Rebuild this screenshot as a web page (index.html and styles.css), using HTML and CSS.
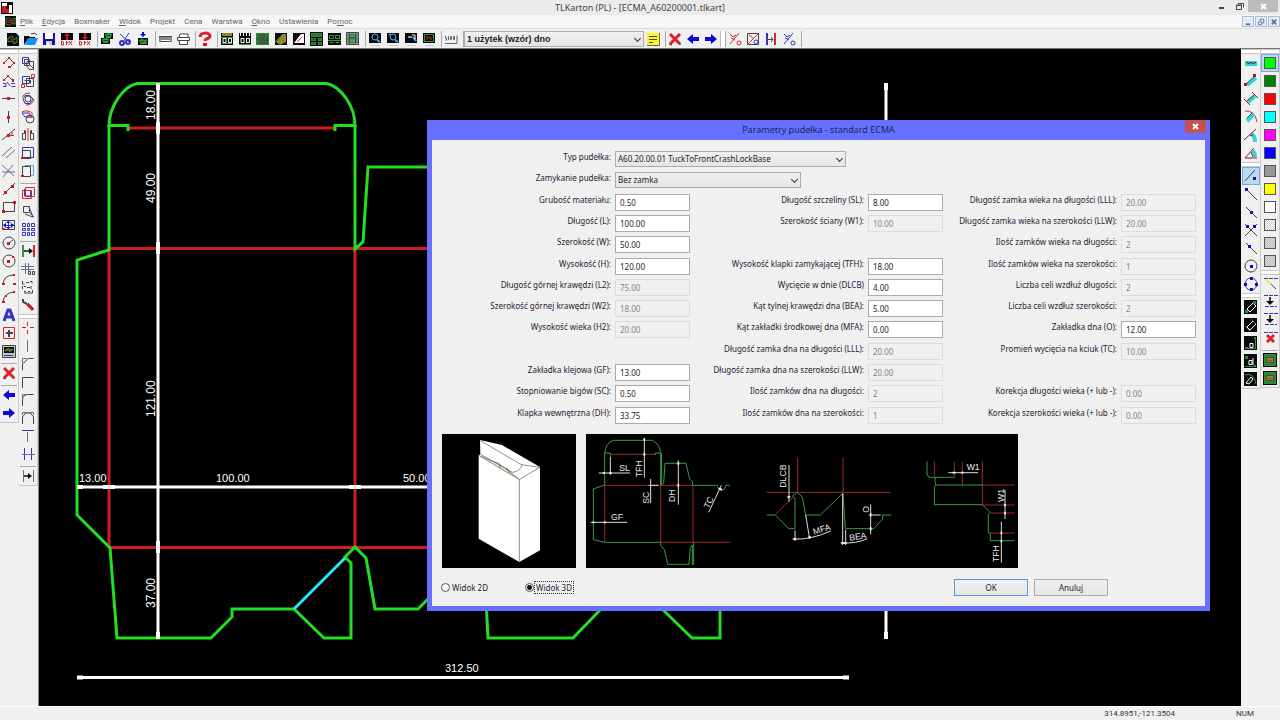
FILE: index.html
```html
<!DOCTYPE html>
<html lang="pl">
<head>
<meta charset="utf-8">
<title>TLKarton (PL) - [ECMA_A60200001.tlkart]</title>
<link rel="stylesheet" href="styles.css">
</head>
<body>
<svg class="sprite" aria-hidden="true">
  <symbol id="left" viewBox="0 0 18 18"><path class="fb" d="M3 9l6-5v3h6v4H9v3z"/></symbol>
  <symbol id="right" viewBox="0 0 18 18"><path class="fb" d="M15 9L9 4v3H3v4h6v3z"/></symbol>
  <symbol id="cross" viewBox="0 0 18 18"><path class="sr w3" d="M4 4l10 10M14 4L4 14"/><path class="sd" d="M3 14l3 1M13 14l2 0"/></symbol>
  <symbol id="board" viewBox="0 0 18 18"><path class="fk" d="M2 2h13v14H2z"/><path class="fg" d="M3 3h11v4H3zM3 8h5v3H3zM10 8h4v3h-4zM3 12h5v3H3zM10 12h4v3h-4z"/><path class="sk" d="M4 5h3M9 5h4M4 9.500h3M11 9.500h2M4 13.500h3M11 13.500h2"/></symbol>
  <symbol id="screen" viewBox="0 0 18 18"><path class="fk" d="M3 3h12v10H3z"/><path class="ssoft" d="M5 15.500h9"/></symbol>
  <symbol id="measure" viewBox="0 0 18 18"><path class="fk" d="M2 2h13v14H2z"/></symbol>
  <symbol id="chip" viewBox="0 0 18 18"><path class="fk" d="M2 2h14v14H2z"/><path class="folive" d="M3 3h12v12H3z"/><path class="fg" d="M3 3h12v3H3zM3 12h12v3H3zM3 6h2v6H3zM13 6h2v6h-2z"/><path class="sk" d="M5.500 6.500h7v5h-7z"/><path class="sr" d="M7 9.500h4"/></symbol>
</svg>

<header class="titlebar">
  <svg class="logo" viewBox="0 0 12 12"><path class="fk" d="M0 0h12v12H0z"/><path class="fw" d="M1 1h5v3H1zM8 3h3v8H8z"/><path class="fr" d="M1 4h4v3h3v4H1z"/></svg>
  <h1 class="title">TLKarton (PL) - [ECMA_A60200001.tlkart]</h1>
  <div class="window-buttons">
    <button aria-label="Minimalizuj"><svg viewBox="0 0 18 12"><path class="sk w2" d="M7 8h5"/></svg></button>
    <button aria-label="Przywróć"><svg viewBox="0 0 18 12"><path class="sk" d="M6.500 5.500h5v4h-5zM8 3.500h5.500v4M6 5h6"/></svg></button>
    <button class="window-close" aria-label="Zamknij"><svg viewBox="0 0 30 12"><path class="sw w2" d="M13 4l5 5M18 4l-5 5"/></svg></button>
  </div>
</header>

<nav class="menubar">
  <svg class="doc-icon" viewBox="0 0 12 12"><path class="fk" d="M0 0h12v12H0z"/><path class="sg" d="M1 9V3l3-1 3 2 4-2v7L8 8l-3 2z"/><path class="sr" d="M3 5h6v2H3z"/></svg>
  <a href="#"><u>P</u>lik</a><a href="#"><u>E</u>dycja</a><a href="#">Boxmaker</a><a href="#"><u>W</u>idok</a><a href="#">Projekt</a><a href="#">Cena</a><a href="#">Warstwa</a><a href="#"><u>O</u>kno</a><a href="#">Ustawienia</a><a href="#">Po<u>m</u>oc</a>
  <div class="document-buttons">
    <button aria-label="Minimalizuj dokument"><svg viewBox="0 0 11 11"><path class="sslate w2" d="M3 8h5"/></svg></button>
    <button aria-label="Przywróć dokument"><svg viewBox="0 0 11 11"><path class="sslate" d="M2.500 5.500h4v3h-4zM4.500 5V2.500h4v4H7"/></svg></button>
    <button aria-label="Zamknij dokument"><svg viewBox="0 0 11 11"><path class="sslate w2" d="M3 3l5 5M8 3L3 8"/></svg></button>
  </div>
</nav>

<div class="toolbar" role="toolbar" aria-label="Główny pasek">
  <button class="tool" aria-label="Nowy"><svg viewBox="0 0 18 18"><path class="fk" d="M3 3h9l3 3v10H3z"/><path class="sg" d="M4 12V8l4-2 2 4 3-3v5l-3 2-2-3z"/><path class="sr" d="M6 8l6 5"/></svg></button>
  <button class="tool" aria-label="Otwórz"><svg viewBox="0 0 18 18"><path class="fk" d="M2 6h5l1 1h5v2H6l-4 6z"/><path class="fazure" d="M6 8h10l-3 7H3z"/><path class="sk" d="M9 4l4-1 2 2"/></svg></button>
  <button class="tool" aria-label="Zapisz"><svg viewBox="0 0 18 18"><path class="fnavy" d="M3 3h12v12H3z"/><path class="fw" d="M5 3h8v6H5z"/><path class="fsilver" d="M6 11h6v4H6z"/><path class="fw" d="M7 12h2v3H7z"/></svg></button>
  <button class="tool" aria-label="Import DXF"><svg viewBox="0 0 18 18"><path class="fk" d="M3 3h12v7H3z"/><path class="fr" d="M9 3l3 3h-2v4H8V6H6z"/><path class="sr" d="M3.500 11v4h2v-3zM8.500 11v4M8.500 12.500h2M11 11l3 4M14 11l-3 4"/></svg></button>
  <button class="tool" aria-label="Eksport DXF"><svg viewBox="0 0 18 18"><path class="fk" d="M3 3h12v7H3z"/><path class="fr" d="M9 10l3-3h-2V3H8v4H6z"/><path class="sr" d="M3.500 11v4h2v-3zM8.500 11v4M8.500 12.500h2M11 11l3 4M14 11l-3 4"/></svg></button>
  <i class="sep"></i>
  <button class="tool" aria-label="Kopiuj"><svg viewBox="0 0 18 18"><path class="fk" d="M6 3h9v6H6zM3 8h9v6H3z"/><path class="sg w2" d="M7 5l4-1 3 1M4 10l4-1 3 1M5 12h5M8 7h5"/></svg></button>
  <button class="tool" aria-label="Wytnij"><svg viewBox="0 0 18 18"><path class="sb" d="M4 4l9 8M13 3L7 12"/><circle class="sb w2" cx="6" cy="13" r="2"/><circle class="sb w2" cx="12" cy="12" r="2"/></svg></button>
  <button class="tool" aria-label="Wstaw"><svg viewBox="0 0 18 18"><path class="fb" d="M8 2h2v2H8zM6 4h6l-3 3z"/><path class="fk" d="M4 8h10v7H4z"/><path class="sg w2" d="M5 11l3-1 3 1 2-1M6 13h7"/></svg></button>
  <i class="sep"></i>
  <button class="tool" aria-label="Drukuj"><svg viewBox="0 0 18 18"><path class="fgray" d="M3 6h13v6H3z"/><path class="fw" d="M5 4h9v2H5zM5 10h9v4H5z"/><path class="sk" d="M3 6.500h13M5 11.500h9"/></svg></button>
  <button class="tool" aria-label="Podgląd wydruku"><svg viewBox="0 0 18 18"><path class="fw sk" d="M3.500 7.500h12v3h-12zM5.500 10.500h8v4h-8zM5 7l1-3h8v3"/></svg></button>
  <i class="sep"></i>
  <button class="tool" aria-label="Pomoc"><svg viewBox="0 0 18 18"><path class="sr w3" d="M4 7c0-5 10-5 10-1 0 3-5 2-5 5"/><path class="fr" d="M7 13h4v3H7z"/></svg></button>
  <i class="sep"></i>
  <button class="tool" aria-label="Wymiary"><svg viewBox="0 0 18 18"><path class="fk" d="M3 3h12v12H3z"/><path class="folive" d="M4 3h10v3H4z"/><path class="sw" d="M5 8.500h3v4H5zM10.500 8.500h3v4h-3z"/><path class="sg" d="M3 7.500h12M4 13.500h10"/></svg></button>
  <button class="tool" aria-label="Wymiary 2"><svg viewBox="0 0 18 18"><path class="fk" d="M3 3h12v12H3z"/><path class="fw" d="M4 3h1v3H4zM7 3h1v3H7zM10 3h1v3h-1zM13 3h1v3h-1z"/><path class="sw" d="M5 8.500h3v4H5zM10.500 8.500h3v4h-3z"/><path class="sg" d="M3 14.500h12"/></svg></button>
  <button class="tool" aria-label="Użytki"><svg viewBox="0 0 18 18"><path class="fg" d="M2 3h13v12H2z"/><path class="sk" d="M4.500 5h3v3h-3zM10.500 5h3v3h-3zM4.500 10.500h3v3h-3zM10.500 10.500h3v3h-3zM2 9h13M9 3v12"/></svg></button>
  <button class="tool" aria-label="Bryła"><svg viewBox="0 0 18 18"><path class="fk" d="M3 3h12v12H3z"/><path class="folive" d="M4 12l7-8h3v8l-6 3z"/><path class="sg" d="M3 12l8-8"/></svg></button>
  <button class="tool" aria-label="Bryła biała"><svg viewBox="0 0 18 18"><path class="fk" d="M3 3h12v12H3z"/><path class="fw" d="M4 13l7-9h3v9z"/><path class="sr" d="M7 12l5-5"/></svg></button>
  <button class="tool" aria-label="Rozkład"><svg viewBox="0 0 18 18"><use href="#board"/></svg></button>
  <button class="tool" aria-label="Matryca"><svg viewBox="0 0 18 18"><path class="fk" d="M2 3h13v12H2z"/><path class="sg" d="M3.500 5.500h4v3h-4zM9.500 5.500h4v3h-4zM2 10.500h13M3.500 12.500h4M9.500 12.500h4"/></svg></button>
  <button class="tool" aria-label="Arkusz"><svg viewBox="0 0 18 18"><path class="sk fgray" d="M2.500 2.500h12v12h-12z"/><path class="sg w2" d="M4 5h9M4 9h9M4 12h9"/><path class="sk" d="M5.500 4v9M11.500 4v9M5 7.500h7"/></svg></button>
  <i class="sep"></i>
  <button class="tool" aria-label="Powiększ"><svg viewBox="0 0 18 18"><use href="#screen"/><circle class="sazure" cx="9" cy="7" r="3"/><path class="sazure w2" d="M11 10l3 2"/></svg></button>
  <button class="tool" aria-label="Powiększ okno"><svg viewBox="0 0 18 18"><use href="#screen"/><circle class="sazure" cx="9" cy="7" r="3"/><path class="sazure w2" d="M11 10l3 2M5 4l1 1"/></svg></button>
  <button class="tool" aria-label="Pomniejsz"><svg viewBox="0 0 18 18"><use href="#screen"/><path class="sazure w2" d="M6 7h4M11 7l3 4"/><path class="sw" d="M10 5h3v4"/></svg></button>
  <button class="tool" aria-label="Cały rysunek"><svg viewBox="0 0 18 18"><use href="#screen"/><path class="sg" d="M4.500 4.500h9v7h-9z"/><path class="sr" d="M7 10V6l2 2 2-1v3"/></svg></button>
  <i class="sep"></i>
  <button class="tool" aria-label="Skala"><svg viewBox="0 0 18 18"><path class="sgray" d="M3 13.500h12v-8M3.500 6v2h1v2h-1M6.500 6v4M8.500 6.500h1v3h-1zM11.500 6.500h1v3h-1z"/></svg></button>
  <i class="sep"></i>
  <span class="select layer"><select aria-label="Warstwa"><option>1 użytek (wzór) dno</option></select></span>
  <button class="tool" aria-label="Notatka"><svg viewBox="0 0 18 18"><path class="fy" d="M3 3h12v12H3z"/><path class="sk" d="M5 6.500h8M5 9.500h8M5 12.500h4"/><path class="sgray" d="M3 15.500h12.500V3"/></svg></button>
  <i class="sep"></i>
  <button class="tool" aria-label="Usuń"><svg><use href="#cross"/></svg></button>
  <button class="tool" aria-label="Cofnij"><svg><use href="#left"/></svg></button>
  <button class="tool" aria-label="Ponów"><svg><use href="#right"/></svg></button>
  <i class="sep grip"></i>
  <button class="tool" aria-label="Przyciąganie"><svg viewBox="0 0 18 18"><path class="sr" d="M4 14L13 3M4 4l3 3 3-2M5 8l4 2"/><circle class="sr" cx="13" cy="13" r="2"/></svg></button>
  <button class="tool" aria-label="Przyciąganie w oknie"><svg viewBox="0 0 18 18"><path class="sk" d="M3.500 3.500h11v11h-11z"/><path class="sr" d="M4 14L14 4M5 5l4 3"/><circle class="sb" cx="12" cy="12" r="2"/></svg></button>
  <button class="tool" aria-label="Odległość"><svg viewBox="0 0 18 18"><path class="sr w2" d="M13 3v12"/><path class="sb w2" d="M5 3v12"/><path class="sk" d="M6 9.500h5M9 7l2 2.500L9 12"/></svg></button>
  <button class="tool" aria-label="Punkty"><svg viewBox="0 0 18 18"><path class="sb" d="M4 14L13 3M4 4l3 3 3-2M5 8l4 2"/><circle class="sb" cx="13" cy="13" r="2"/></svg></button>
  <i class="sep"></i>
</div>

<main class="workspace">
  <aside class="dock">
    <div class="strip" role="toolbar" aria-label="Rysowanie">
      <i class="handle"></i>
      <button class="tool" aria-label="Polilinia"><svg viewBox="0 0 18 18"><path class="sk" d="M4 9l5-5 5 5-4 4"/><path class="fr" d="M3 8h2v2H3zM8 3h2v2H8zM13 8h2v2h-2zM8 12h3v2H8z"/></svg></button>
      <button class="tool" aria-label="Polilinia z wymiarem"><svg viewBox="0 0 18 18"><path class="sk" d="M4 8l4-4 5 5"/><path class="fr" d="M3 7h2v2H3zM7 3h2v2H7zM12 7h2v3h-2z"/><path class="sb" d="M3 11.500h3v3H3M11 11.500h4M11.500 14.500h4M7 10l3 4"/></svg></button>
      <button class="tool" aria-label="Pozioma"><svg viewBox="0 0 18 18"><path class="sk" d="M2 8.500h13"/><path class="fr" d="M7 7h3v3H7z"/></svg></button>
      <button class="tool" aria-label="Pionowa"><svg viewBox="0 0 18 18"><path class="sk" d="M8.500 3v12"/><path class="fr" d="M7 8h3v3H7z"/></svg></button>
      <button class="tool" aria-label="Kąt"><svg viewBox="0 0 18 18"><path class="sk" d="M2 14L15 3"/><path class="sr" d="M8 9.500h6M12 6v4"/><path class="fr" d="M7 8h3v3H7z"/></svg></button>
      <button class="tool" aria-label="Równoległa"><svg viewBox="0 0 18 18"><path class="sslate" d="M2 12L12 3M6 14l9-8"/></svg></button>
      <button class="tool" aria-label="Przecięcie"><svg viewBox="0 0 18 18"><path class="sslate" d="M2 3l12 11M13 3L3 15M2 10h13"/></svg></button>
      <button class="tool" aria-label="Odcinek"><svg viewBox="0 0 18 18"><path class="sk" d="M3 15L15 3"/><path class="fr" d="M4 11h3v3H4zM11 5h3v3h-3z"/></svg></button>
      <button class="tool" aria-label="Prostokąt"><svg viewBox="0 0 18 18"><path class="sk" d="M3.500 4.500h11v9h-11z"/><path class="fr" d="M2 12h3v3H2zM13 3h3v3h-3z"/></svg></button>
      <button class="tool" aria-label="Prostokąt wymiarowany"><svg viewBox="0 0 18 18"><path class="sk" d="M2.500 4.500h12v9h-12z"/><path class="sb" d="M4 9.500h10M8.500 5v8"/><path class="fb" d="M3 9l3-2v5zM14 9l-3-2v5zM8 5l-2 2h5zM8 13l-2-2h5z"/><path class="fr" d="M2 12h3v2H2z"/></svg></button>
      <button class="tool" aria-label="Okrąg z promieniem"><svg viewBox="0 0 18 18"><circle class="sk" cx="9" cy="9" r="6"/><path class="sb" d="M9 9l4-3"/><path class="fr" d="M7 8h3v3H7z"/></svg></button>
      <button class="tool" aria-label="Okrąg"><svg viewBox="0 0 18 18"><circle class="sk" cx="9" cy="9" r="6"/><path class="fr" d="M7 8h3v3H7zM12 4h2v2h-2z"/></svg></button>
      <button class="tool" aria-label="Łuk trzypunktowy"><svg viewBox="0 0 18 18"><path class="sk" d="M3 14Q4 5 14 5"/><path class="fr" d="M2 13h3v2H2zM13 4h2v2h-2zM13 13h3v2h-3z"/></svg></button>
      <button class="tool" aria-label="Łuk"><svg viewBox="0 0 18 18"><path class="sk" d="M3 14Q4 5 14 4"/><path class="fr" d="M2 13h3v2H2zM13 3h2v2h-2zM5 7h2v2H5z"/></svg></button>
      <button class="tool" aria-label="Tekst"><svg viewBox="0 0 18 18"><path class="sb w3" d="M4 15L8 4h2l4 11M6 11h7"/></svg></button>
      <button class="tool" aria-label="Punkt"><svg viewBox="0 0 18 18"><path class="sr" d="M3.500 3.500h11v11h-11z"/><path class="sk w2" d="M9 6v7M6 9h7"/></svg></button>
      <button class="tool" aria-label="Biblioteka"><svg viewBox="0 0 18 18"><path class="sk fsilver" d="M2.500 3.500h13v12h-13z"/><path class="fk" d="M4 5h10v6H4z"/><path class="sg w2" d="M5 9l3-2 2 2 3-2"/><path class="sr" d="M7 8h4"/><path class="sb" d="M4 13.500h9"/></svg></button>
      <i class="rule"></i>
      <button class="tool" aria-label="Kasuj"><svg><use href="#cross"/></svg></button>
      <i class="rule"></i>
      <button class="tool" aria-label="Wstecz"><svg><use href="#left"/></svg></button>
      <button class="tool" aria-label="Dalej"><svg><use href="#right"/></svg></button>
      <i class="end"></i>
    </div>
    <div class="strip" role="toolbar" aria-label="Modyfikacje">
      <i class="handle"></i>
      <button class="tool" aria-label="Przesuń"><svg viewBox="0 0 18 18"><path class="sb" d="M3.500 3.500h6v6h-6z"/><path class="sk" d="M5.500 5.500h5v6h-5zM8 7.500h6.500v8h-4l-3-4zM10 10l4 4"/></svg></button>
      <button class="tool" aria-label="Powiel"><svg viewBox="0 0 18 18"><path class="sb" d="M3.500 4.500h7v7h-7z"/><path class="sk" d="M7.500 6.500h7v8h-7zM5.500 8.500h6v3"/><path class="sr" d="M12.500 2.500h3v3h-3zM2.500 12.500h3v3h-3z"/></svg></button>
      <button class="tool" aria-label="Obróć"><svg viewBox="0 0 18 18"><path class="sr" d="M3 7q3-5 8-4M7 15q7 0 8-6"/><path class="sb" d="M6 5.500h5l3 3.500-3 4.500H6L4 9z"/><circle class="sk" cx="9" cy="9" r="3"/></svg></button>
      <button class="tool" aria-label="Obróć kopię"><svg viewBox="0 0 18 18"><path class="sb" d="M3 5h7l3 4H6z"/><circle class="sk" cx="11" cy="11" r="4"/><path class="sr" d="M3 4q6-3 11 2M7 9h7"/></svg></button>
      <button class="tool" aria-label="Odbicie"><svg viewBox="0 0 18 18"><path class="sr" d="M9 2v13"/><path class="sk" d="M3.500 13.500v-6h2v-3h1v9zM14.500 13.500v-6h-2v-3h-1v9z"/></svg></button>
      <button class="tool" aria-label="Skaluj"><svg viewBox="0 0 18 18"><path class="sb" d="M3.500 3.500h11v10h-11z"/><path class="sk" d="M3.500 6.500h8v8h-8z"/><path class="fr" d="M2 13h3v2H2z"/></svg></button>
      <button class="tool" aria-label="Rozciągnij"><svg viewBox="0 0 18 18"><path class="sazure" d="M6 3.500h8.500v10H12"/><path class="sk" d="M3.500 4.500h8v10h-8z"/><path class="fr" d="M2 13h3v2H2z"/></svg></button>
      <i class="rule"></i>
      <button class="tool" aria-label="Zaznacz"><svg viewBox="0 0 18 18"><path class="sr" d="M3.500 6.500h9v8h-9zM6.500 3.500h9v9h-9z"/><path class="sb" d="M5.500 5v7h6V7"/></svg></button>
      <button class="tool" aria-label="Wielokąt"><svg viewBox="0 0 18 18"><path class="sk" d="M4.500 4.500h6v6h-6zM10 5l4 10-8-3"/><path class="sb" d="M11 11l4 4"/></svg></button>
      <button class="tool" aria-label="Siatka"><svg viewBox="0 0 18 18"><path class="sb" d="M3.500 3.500h3v3h-3zM8.500 3.500h2v3h-2zM12.500 3.500h3v3h-3zM3.500 8.500h3v2h-3zM8.500 8.500h2v2h-2zM12.500 8.500h3v2h-3zM3.500 12.500h3v3h-3zM8.500 12.500h2v3h-2zM12.500 12.500h3v3h-3z"/></svg></button>
      <i class="rule"></i>
      <button class="tool" aria-label="Dociągnij"><svg viewBox="0 0 18 18"><path class="sg w2" d="M4 3v12"/><path class="sr w2" d="M15 3v12"/><path class="sk w2" d="M5 9h6"/><path class="fk" d="M10 6l4 3-4 3z"/></svg></button>
      <button class="tool" aria-label="Współrzędne"><svg viewBox="0 0 18 18"><path class="sslate" d="M2 6.500h13M2 9.500h13M6.500 3v11M9.500 3v11"/><path class="sk" d="M9.500 11.500h2v3h-2zM13.500 11.500h2v3h-2z"/></svg></button>
      <button class="tool" aria-label="Lista"><svg viewBox="0 0 18 18"><path class="sk" d="M3.500 3v3h2M7 4.500h3M11 3.500h2v2M3.500 8v3M5 8.500h2M8 9.500h3M12 8v3M5 13.500h2M9 13.500h2M13.500 12v3H5"/></svg></button>
      <button class="tool" aria-label="Narzędzia"><svg viewBox="0 0 18 18"><path class="sk w2" d="M4 3v3l4 2"/><path class="sr w3" d="M8 8l6 6"/><path class="sd" d="M9 7l6 6"/></svg></button>
      <i class="handle"></i>
      <button class="tool" aria-label="Podziel"><svg viewBox="0 0 18 18"><path class="sr" d="M3 8.500h4M11 8.500h4M8.500 3v4M8.500 11v4"/></svg></button>
      <button class="tool" aria-label="Utnij"><svg viewBox="0 0 18 18"><path class="sslate" d="M8.500 3v12"/></svg></button>
      <button class="tool" aria-label="Faza"><svg viewBox="0 0 18 18"><path class="sk" d="M3.500 15V9l6-5.500h5"/><path class="sslate" d="M3.500 8V3.500H8"/></svg></button>
      <button class="tool" aria-label="Narożnik"><svg viewBox="0 0 18 18"><path class="sk" d="M3.500 15V4.500h11"/></svg></button>
      <button class="tool" aria-label="Zaokrąglenie"><svg viewBox="0 0 18 18"><path class="sk" d="M3.500 15V9q0-5 5-5.500h6"/><path class="sslate" d="M3.500 7V3.500H7"/></svg></button>
      <button class="tool" aria-label="Zaokrąglenie podwójne"><svg viewBox="0 0 18 18"><path class="sk" d="M3.500 15V8l3-4h5l3 4v7"/><path class="sslate" d="M3.500 6V3.500h11V6"/></svg></button>
      <button class="tool" aria-label="Przedłuż"><svg viewBox="0 0 18 18"><path class="sb" d="M3 3.500h12"/><path class="sslate" d="M8.500 5v10"/></svg></button>
      <button class="tool" aria-label="Rozsuń"><svg viewBox="0 0 18 18"><path class="sb" d="M5.500 3v12M12.500 3v12"/><path class="sslate" d="M3 9.500h13"/></svg></button>
      <i class="rule"></i>
      <button class="tool" aria-label="Wyrównaj"><svg viewBox="0 0 18 18"><path class="sslate" d="M4.500 3v12M14.500 3v12"/><path class="sk w2" d="M5 9h5"/><path class="fk" d="M9 6l4 3-4 3z"/></svg></button>
      <i class="end"></i>
    </div>
  </aside>

  <section class="canvas">
    <svg class="drawing" viewBox="39 49 1202 657" preserveAspectRatio="xMinYMin meet" role="img" aria-label="Siatka pudełka">
      <g class="crease"><path d="M128 128H336M109 248.500H440M109 547.500H440M109 248V548M355 248V548"/></g>
      <g class="cut">
        <path d="M128 131V125.500H109C109 106 124 86 137 83.500H327C341 87 355 106 355 125.500H335V131"/>
        <path d="M109 125V250L77 260V515L110 548L117 638H211L232 617V609H294L324 638H351V563L345 557L355 547L366 558L375 609H418L430 597"/>
        <path d="M355 125V249L363 242L368 167H440M486 600L488 638H573L602 608M661 608L692 638H720V600"/>
      </g>
      <path class="perf" d="M294 609L345 558"/>
      <g class="dimension">
        <path d="M158 83V639M77 487H440M77 677.500H848M886 83V639"/>
        <path class="ticks" d="M158 83v7M158 122v12M158 242v12M158 541v12M158 632v7M77 487h6M103 487h12M349 487h12M77 677.500h6M843 677.500h6M886 83v7M886 632v7"/>
      </g>
      <g class="measure">
        <text x="79" y="482">13.00</text><text x="216" y="482">100.00</text><text x="403" y="482">50.00</text><text x="445" y="672">312.50</text>
        <g class="upright"><text transform="translate(155 120) rotate(-90)">18.00</text><text transform="translate(155 203) rotate(-90)">49.00</text><text transform="translate(155 417) rotate(-90)">121.00</text><text transform="translate(155 608) rotate(-90)">37.00</text></g>
      </g>
    </svg>

    <form class="dialog" role="dialog" aria-labelledby="dialog-title" onsubmit="return false">
      <div class="dialog-bar"><h2 id="dialog-title">Parametry pudełka - standard ECMA</h2>
        <button type="button" class="dialog-close" aria-label="Zamknij okno"><svg viewBox="0 0 21 13"><path class="sw w2" d="M8 4l5 5M13 4l-5 5"/></svg></button></div>
      <div class="dialog-body">
        <div class="fields">
          <div class="column">
            <div class="field"><label for="typ">Typ pudełka:</label><span class="select wide"><select id="typ"><option>A60.20.00.01 TuckToFrontCrashLockBase</option></select></span></div>
            <div class="field"><label for="zam">Zamykanie pudełka:</label><span class="select medium"><select id="zam"><option>Bez zamka</option></select></span></div>
            <div class="field"><label for="gm">Grubość materiału:</label><input id="gm" value="0.50"></div>
            <div class="field"><label for="l">Długość (L):</label><input id="l" value="100.00"></div>
            <div class="field"><label for="w">Szerokość (W):</label><input id="w" value="50.00"></div>
            <div class="field"><label for="h">Wysokość (H):</label><input id="h" value="120.00"></div>
            <div class="field"><label for="l2">Długość górnej krawędzi (L2):</label><input id="l2" value="75.00" disabled></div>
            <div class="field"><label for="w2">Szerokość górnej krawędzi (W2):</label><input id="w2" value="18.00" disabled></div>
            <div class="field"><label for="h2">Wysokość wieka (H2):</label><input id="h2" value="20.00" disabled></div>
            <div class="field"></div>
            <div class="field"><label for="gf">Zakładka klejowa (GF):</label><input id="gf" value="13.00"></div>
            <div class="field"><label for="sc">Stopniowanie bigów (SC):</label><input id="sc" value="0.50"></div>
            <div class="field"><label for="dh">Klapka wewnętrzna (DH):</label><input id="dh" value="33.75"></div>
          </div>
          <div class="column">
            <div class="field"></div>
            <div class="field"></div>
            <div class="field"><label for="sl">Długość szczeliny (SL):</label><input id="sl" value="8.00"></div>
            <div class="field"><label for="w1">Szerokość ściany (W1):</label><input id="w1" value="10.00" disabled></div>
            <div class="field"></div>
            <div class="field"><label for="tfh">Wysokość klapki zamykającej (TFH):</label><input id="tfh" value="18.00"></div>
            <div class="field"><label for="dlcb">Wycięcie w dnie (DLCB)</label><input id="dlcb" value="4.00"></div>
            <div class="field"><label for="bea">Kąt tylnej krawędzi dna (BEA):</label><input id="bea" value="5.00"></div>
            <div class="field"><label for="mfa">Kąt zakładki środkowej dna (MFA):</label><input id="mfa" value="0.00"></div>
            <div class="field"><label for="lll">Długość zamka dna na długości (LLL):</label><input id="lll" value="20.00" disabled></div>
            <div class="field"><label for="llw">Długość zamka dna na szerokości (LLW):</label><input id="llw" value="20.00" disabled></div>
            <div class="field"><label for="izd">Ilość zamków dna na długości:</label><input id="izd" value="2" disabled></div>
            <div class="field"><label for="izs">Ilość zamków dna na szerokości:</label><input id="izs" value="1" disabled></div>
          </div>
          <div class="column">
            <div class="field"></div>
            <div class="field"></div>
            <div class="field"><label for="wlll">Długość zamka wieka na długości (LLL):</label><input id="wlll" value="20.00" disabled></div>
            <div class="field"><label for="wllw">Długość zamka wieka na szerokości (LLW):</label><input id="wllw" value="20.00" disabled></div>
            <div class="field"><label for="wzd">Ilość zamków wieka na długości:</label><input id="wzd" value="2" disabled></div>
            <div class="field"><label for="wzs">Ilość zamków wieka na szerokości:</label><input id="wzs" value="1" disabled></div>
            <div class="field"><label for="lcd">Liczba celi wzdłuż długości:</label><input id="lcd" value="2" disabled></div>
            <div class="field"><label for="lcs">Liczba celi wzdłuż szerokości:</label><input id="lcs" value="2" disabled></div>
            <div class="field"><label for="o">Zakładka dna (O):</label><input id="o" value="12.00"></div>
            <div class="field"><label for="tc">Promień wycięcia na kciuk (TC):</label><input id="tc" value="10.00" disabled></div>
            <div class="field"></div>
            <div class="field"><label for="kd">Korekcja długości wieka (+ lub -):</label><input id="kd" value="0.00" disabled></div>
            <div class="field"><label for="ks">Korekcja szerokości wieka (+ lub -):</label><input id="ks" value="0.00" disabled></div>
          </div>
        </div>

        <div class="previews">
          <svg class="preview box" viewBox="36 27 402 402" role="img" aria-label="Pudełko 3D">
            <path class="face" d="M146 91L151 88L150 45L216 60L330 126V376L268 411L146 341Z"/>
            <path class="tint" d="M158 98L205 116L262 156L238 148Z"/>
            <path class="edge" d="M146 91L268 164L330 126M268 164V410M151 47L274 119L330 127M151 88L248 142Q271 139 276 119M152 94L205 115L266 161M205 115L212 128M230 128L240 143"/>
          </svg>
          <svg class="preview net" viewBox="468 27 1296 402" role="img" aria-label="Oznaczenia wymiarów">
            <g class="thin-red"><path d="M540 88H676M524 181H790M524 181V351M692 181V351M789 181V351M692 352H900"/></g>
            <g class="thin-green"><path d="M541 96V84H524V180L490 192V344L524 352H692M524 84Q527 55 549 46H667Q690 58 692 84H676V90M695 84V180L701 174L705 115H768L779 162L788 170V181H862Q864 196 874 196Q885 196 887 181H900M692 84V180M692 352V362L703 373L713 418H777L781 369L787 360V418H791V352"/></g>
            <g class="thin-white"><path d="M643 40V158M541 96V150M506 144H600M662 162V234M656 181H686M745 106V239M482 292H592M874 181L836 262"/><path class="mark" d="M643 40v8M643 84v8M518 144h7M538 144h7M745 111v8M745 177v8M487 292h7M521 292h7M866 190l10 4"/></g>
            <g class="label"><text x="568" y="137">SL</text><text x="543" y="286">GF</text><text transform="translate(637 157) rotate(-90)">TFH</text><text transform="translate(657 236) rotate(-90)">SC</text><text transform="translate(736 231) rotate(-90)">DH</text><text transform="translate(836 252) rotate(-63)">TC</text></g>
            <g transform="translate(900 0)">
              <g class="thin-red"><path d="M110 202H483M203 98V202M339 98V202M136 268L190 216M613 110V154M673 110V155M697 110V180M757 110V240M757 180H854M757 240H854M780 264H854M780 324H854"/></g>
              <g class="thin-green"><path d="M110 270H136L176 311H195V220L188 214L201 202L217 216L227 270H271L339 204L346 311H431L458 282V270H484M591 110V145Q592 155 599 157H674M616 157Q612 170 618 180H757M618 180L613 186V239H757L780 262L775 268V324H781V347H854"/></g>
              <g class="thin-white"><path d="M177 120V230M227 270L239 342M195 316V348M188 342Q240 346 302 318M338 206V360M347 314V360M332 354Q380 356 412 341M422 238V328M416 270H452M655 143H744M825 194V282M814 290V413"/><path class="mark" d="M172 216h9M190 342h9M235 336h8M334 354h16M422 265v9M422 307v9M668 143h8M693 143h8M825 236v8M825 260v8M814 320v8M814 344v8"/></g>
              <g class="label"><text transform="translate(169 188) rotate(-90)">DLCB</text><text transform="translate(252 329) rotate(-17)">MFA</text><text transform="translate(359 347) rotate(-8)">BEA</text><text transform="translate(417 263) rotate(-90)">O</text><text x="710" y="136">W1</text><text transform="translate(821 231) rotate(-90)">W1</text><text transform="translate(807 411) rotate(-90)">TFH</text></g>
            </g>
          </svg>
        </div>

        <div class="actions">
          <label class="choice"><input type="radio" name="view"><span>Widok 2D</span></label>
          <label class="choice"><input type="radio" name="view" checked><span class="focused">Widok 3D</span></label>
          <div class="buttons"><button class="push default">OK</button><button type="button" class="push">Anuluj</button></div>
        </div>
      </div>
    </form>
  </section>

  <aside class="dock right-dock">
    <div class="strip" role="toolbar" aria-label="Wymiarowanie">
      <i class="handle"></i>
      <button class="tool" aria-label="Linijka"><svg viewBox="0 0 18 18"><path class="fc" d="M3 7h12v5H3z"/><path class="sk" d="M4 8.500h2v1h2v-1h2v1h2v-1h2"/></svg></button>
      <button class="tool" aria-label="Wymiar skośny"><svg viewBox="0 0 18 18"><path class="sc w4" d="M5 13l9-7"/><path class="sk" d="M4 12L13 4"/><path class="fd" d="M2 11h3v3H2zM11 2h3v3h-3z"/></svg></button>
      <button class="tool" aria-label="Wymiar między liniami"><svg viewBox="0 0 18 18"><path class="sc w4" d="M6 12l7-6"/><path class="sk" d="M5 11l7-6"/><path class="sd" d="M2 9l6 6M10 2l6 6"/></svg></button>
      <button class="tool" aria-label="Promień"><svg viewBox="0 0 18 18"><path class="sr" d="M3 3q10-1 12 11"/><path class="sc w4" d="M5 13l7-7"/><path class="sk" d="M5 10l5-5"/></svg></button>
      <button class="tool" aria-label="Wymiar kąta"><svg viewBox="0 0 18 18"><path class="sc w4" d="M9 8q4 1 4 8"/><path class="sd" d="M2 14L14 3"/><path class="sk" d="M8 9l3 1"/></svg></button>
      <button class="tool" aria-label="Kąt między liniami"><svg viewBox="0 0 18 18"><path class="sc w4" d="M10 7q3 1 3 6"/><path class="sd" d="M15 14H3L12 4"/><path class="sk" d="M9 8l2 5"/></svg></button>
      <i class="handle"></i>
      <button class="tool active" aria-label="Koniec"><svg viewBox="0 0 18 18"><path class="sk" d="M3 14L13 3"/><path class="fnavy" d="M11 10h3v3h-3z"/></svg></button>
      <button class="tool" aria-label="Początek"><svg viewBox="0 0 18 18"><path class="sk" d="M4 4l11 11"/><path class="fnavy" d="M3 3h3v3H3z"/></svg></button>
      <button class="tool" aria-label="Środek"><svg viewBox="0 0 18 18"><path class="sk" d="M4 4l11 11"/><path class="fnavy" d="M8 8h3v3H8z"/></svg></button>
      <button class="tool" aria-label="Przecięcie linii"><svg viewBox="0 0 18 18"><path class="sk" d="M3 3l12 12M15 3L3 15"/><path class="fb" d="M4 4h3v3H4zM11 4h3v3h-3z"/></svg></button>
      <button class="tool" aria-label="Najbliższy"><svg viewBox="0 0 18 18"><path class="sk" d="M4 4l11 11"/><path class="fb" d="M6 6h3v3H6z"/></svg></button>
      <button class="tool" aria-label="Środek okręgu"><svg viewBox="0 0 18 18"><circle class="sk" cx="9" cy="9" r="6"/><path class="fb" d="M8 8h3v3H8z"/></svg></button>
      <button class="tool" aria-label="Kwadrant"><svg viewBox="0 0 18 18"><circle class="sk" cx="9" cy="9" r="6"/><path class="fb" d="M8 2h3v3H8zM8 13h3v3H8zM2 8h3v3H2zM13 8h3v3h-3z"/></svg></button>
      <i class="handle"></i>
      <button class="tool" aria-label="Pomiar 1"><svg viewBox="0 0 18 18"><use href="#measure"/><path class="sw" d="M5 11l6-6 3 3-6 6z"/><path class="fg" d="M3 12h3v3H3zM11 3h3v3h-3z"/></svg></button>
      <button class="tool" aria-label="Pomiar 2"><svg viewBox="0 0 18 18"><use href="#measure"/><path class="sw" d="M5 11l6-6 3 3-6 6z"/><path class="sg" d="M3 10l5 5M9 3l5 5"/></svg></button>
      <button class="tool" aria-label="Pomiar 3"><svg viewBox="0 0 18 18"><use href="#measure"/><path class="sg" d="M3 14.500h10.500V3"/><path class="sw" d="M8 9.500h3v4H8z"/><path class="fg" d="M3 13h3v2H3zM12 3h2v2h-2z"/></svg></button>
      <button class="tool" aria-label="Pomiar 4"><svg viewBox="0 0 18 18"><use href="#measure"/><path class="sw" d="M7 8.500h3v4H7zM11 6v7"/><path class="fg" d="M3 4h3v3H3zM12 13h2v2H3v-1h9z"/></svg></button>
      <button class="tool" aria-label="Pomiar 5"><svg viewBox="0 0 18 18"><use href="#measure"/><path class="sg" d="M3 5q9-3 11 9"/><path class="sw" d="M4 13l5-6 2 2-4 5z"/></svg></button>
      <i class="end"></i>
    </div>
    <div class="strip" role="toolbar" aria-label="Kolory linii">
      <i class="handle"></i>
      <button class="tool active" aria-label="Jasnozielony"><i class="swatch lime"></i></button>
      <button class="tool" aria-label="Zielony"><i class="swatch green"></i></button>
      <button class="tool" aria-label="Czerwony"><i class="swatch red"></i></button>
      <button class="tool" aria-label="Błękitny"><i class="swatch cyan"></i></button>
      <button class="tool" aria-label="Purpurowy"><i class="swatch magenta"></i></button>
      <button class="tool" aria-label="Niebieski"><i class="swatch blue"></i></button>
      <button class="tool" aria-label="Szary"><i class="swatch gray"></i></button>
      <button class="tool" aria-label="Żółty"><i class="swatch yellow"></i></button>
      <button class="tool" aria-label="Biały"><i class="swatch white"></i></button>
      <button class="tool" aria-label="Raster 1"><i class="swatch dots light"></i></button>
      <button class="tool" aria-label="Raster 2"><i class="swatch dots"></i></button>
      <button class="tool" aria-label="Raster 3"><i class="swatch dots"></i></button>
      <i class="handle"></i>
      <button class="tool" aria-label="Styl linii"><svg viewBox="0 0 18 18"><path class="sb dash" d="M3 3.500h14"/><path class="sy w2" d="M5 5l5 4"/><path class="sk" d="M10 9l5 5"/></svg></button>
      <button class="tool" aria-label="Przenieś styl"><svg viewBox="0 0 18 18"><path class="sb dash" d="M3 2.500h14M4 13.500h12"/><path class="sk w2" d="M9 4v5"/><path class="fk" d="M5 8h8l-4 4z"/></svg></button>
      <button class="tool" aria-label="Kopiuj styl"><svg viewBox="0 0 18 18"><path class="sb dash" d="M3 2.500h14M4 13.500h12"/><path class="sk w2" d="M9 4v5"/><path class="fk" d="M5 8h8l-4 4z"/></svg></button>
      <button class="tool" aria-label="Usuń styl"><svg viewBox="0 0 18 18"><path class="sb dash" d="M3 3.500h14"/><path class="sr w3" d="M6 6l7 7M13 6l-7 7"/></svg></button>
      <i class="rule"></i>
      <button class="tool" aria-label="Warstwa użytku"><svg><use href="#chip"/></svg></button>
      <button class="tool" aria-label="Warstwa arkusza"><svg><use href="#chip"/></svg></button>
      <i class="end"></i>
    </div>
  </aside>
</main>

<footer class="statusbar"><span>314.8951,-121.3504</span><span class="num">NUM</span></footer>
</body>
</html>
```
FILE: styles.css
```css
* { box-sizing: border-box; }
body {
  margin: 0;
  min-height: 100vh;
  display: flex;
  flex-direction: column;
  background: #f0f0f0;
  color: #222;
  font: 8px/12px Roboto, "Noto Sans", sans-serif;
}
button, input, select { font: inherit; color: inherit; margin: 0; }
button { border: 0; padding: 0; background: none; }
i { display: block; font-style: normal; }
svg { display: block; fill: none; }
.sprite { position: absolute; width: 0; height: 0; }

/* icon strokes and fills */
.sk { stroke: #444; } .sr { stroke: #d8242c; } .sd { stroke: #8c1a1a; } .sb { stroke: #3434c0; }
.sg { stroke: #2f9a3a; } .sc { stroke: #38d0d8; } .sw { stroke: #fff; } .sy { stroke: #f4ee20; }
.sgray { stroke: #666; } .sslate { stroke: #66708c; } .sazure { stroke: #58a8e8; } .ssoft { stroke: #c4ccd4; }
.fk { fill: #0a0a0a; } .fr { fill: #d8141c; } .fd { fill: #a81820; } .fb { fill: #0808d8; } .fg { fill: #2c8a34; }
.fc { fill: #25d8e0; } .fw { fill: #fff; } .fy { fill: #fcf820; } .folive { fill: #94862e; }
.fnavy { fill: #14149c; } .fazure { fill: #1890f0; } .fsilver { fill: #c4c8c4; } .fgray { fill: #888; }
.w2 { stroke-width: 2; } .w3 { stroke-width: 3; } .w4 { stroke-width: 4; }
.dash { stroke-dasharray: 4 1; }

.titlebar { height: 15px; display: flex; align-items: center; background: #ebebeb; }
.logo { width: 12px; height: 12px; margin-left: 1px; }
.title { flex: 1; margin: 0; padding-left: 55px; text-align: center; font: 400 9px/14px "Noto Sans", sans-serif; color: #444; }
.window-buttons { display: flex; align-self: flex-start; padding-right: 2px; }
.window-buttons button { width: 18px; height: 12px; }
.window-buttons .window-close { width: 30px; background: #bcbcbc; }

.menubar { height: 14px; display: flex; align-items: center; gap: 9px; padding-left: 5px; background: #f5f6f7; border-bottom: 1px solid #ddd; }
.menubar a { color: #666; text-decoration: none; line-height: 12px; }
.doc-icon { width: 11px; height: 11px; margin-right: -5px; }
.document-buttons { display: flex; gap: 1px; margin-left: auto; }
.document-buttons button { width: 12px; height: 11px; border: 1px solid #a9bdd6; background: #e4edf8; }

.toolbar { height: 20px; display: flex; align-items: center; padding-left: 4px; border-bottom: 1px solid #777; }
.toolbar .sep { width: 4px; height: 16px; border-right: 1px solid #aaa; }
.toolbar .grip { width: 6px; border-left: 1px solid #bbb; background: #fff; }
.tool { display: block; width: 18px; height: 18px; flex: none; }
.tool svg { width: 18px; height: 18px; }

.select { position: relative; display: block; }
.select::after {
  content: ""; position: absolute; right: 4px; top: 5px; width: 4px; height: 4px;
  border: solid #333; border-width: 0 1px 1px 0; transform: rotate(45deg); pointer-events: none;
}
.select select {
  appearance: none; display: block; width: 100%; height: 16px; padding: 0 2px; border: 1px solid #acacac; border-radius: 0;
  background: linear-gradient(#f0f0f0, #e5e5e5); line-height: 14px;
}
.layer { width: 180px; }
.layer select { font: 700 9px/14px "Liberation Sans", sans-serif; }

.workspace { flex: 1; display: flex; }
.dock { display: flex; align-items: flex-start; width: 39px; flex: none; border-right: 1px solid #888; }
.right-dock { border: 0; padding-left: 1px; }
.strip { width: 19px; border-right: 1px solid #ccc; }
.right-dock .strip { width: auto; min-width: 19px; }
.handle { height: 5px; border: 1px solid #c8c8c8; border-width: 1px 0; background: #fff; }
.rule { height: 4px; border-bottom: 1px solid #aaa; margin: 0 1px; }
.end { height: 1px; background: #c4c4c4; }
.active { background: #bcd8f4; border: 1px solid #78a8dc; }
.active svg { margin: -1px; }
.swatch { width: 12px; height: 12px; margin: 3px; border: 1px solid #555; }
.active .swatch { margin: 2px; }
.lime { background: #0f0; } .green { background: #008000; } .red { background: #f00; } .cyan { background: #0ff; }
.magenta { background: #f0f; } .blue { background: #00f; } .gray { background: #999; } .yellow { background: #ff0; } .white { background: #fff; }
.dots { background: repeating-conic-gradient(#bbb 0 25%, #ddd 0 50%) 0 0 / 2px 2px; }
.dots.light { background: repeating-conic-gradient(#ccc 0 25%, #fff 0 50%) 0 0 / 2px 2px; }

.canvas { flex: 1; min-width: 0; position: relative; background: #000; }
.drawing { width: 100%; }
.crease { stroke: #d01c1c; stroke-width: 3; }
.cut { stroke: #20e020; stroke-width: 3; }
.perf { stroke: #28e8f0; stroke-width: 3; }
.dimension { stroke: #fff; stroke-width: 3; }
.ticks { stroke-width: 4; }
.measure { fill: #fff; font: 11px "Liberation Sans", sans-serif; }
.upright { font-size: 12px; }

/* box parameters window, floating over the drawing area */
.dialog { position: absolute; left: 388px; top: 71px; width: 783px; padding: 0 5px 5px; background: #6672ff; }
.dialog-bar { height: 20px; position: relative; }
.dialog-bar h2 { margin: 0; font: 400 9px/20px "Noto Sans", sans-serif; text-align: center; color: #1c2260; }
.dialog-close { position: absolute; top: 0; right: -1px; width: 21px; height: 13px; background: #c75050; }
.dialog-body { padding: 11px 9px 10px 0; background: #f0f0f0; font: 8px/12px "Noto Sans", sans-serif; color: #2c2030; }
.fields { display: grid; grid-template-columns: 258px 1fr 1fr; }
.column { display: grid; grid-template-rows: repeat(13, 1fr); height: 277px; min-width: 0; }
.field { display: grid; grid-template-columns: 1fr 75px; column-gap: 4px; min-width: 0; align-items: start; }
.field label { text-align: right; white-space: nowrap; line-height: 12px; }
.field input { width: 75px; height: 17px; padding: 0 4px; border: 1px solid #ababab; background: #fff; line-height: 15px; }
.field input:disabled { background: #f0f0f0; border-color: #dcdcdc; color: #858585; }
.wide { width: 231px; }
.medium { width: 186px; }

.previews { display: flex; gap: 10px; padding: 6px 0 0 10px; }
.preview { background: #000; height: 134px; }
.box { width: 134px; }
.net { width: 432px; }
.face { fill: #fff; } .tint { fill: #ecead0; } .edge { stroke: #555; stroke-width: 2; }
.thin-red { stroke: #a02828; stroke-width: 3; } .thin-green { stroke: #3c9848; stroke-width: 3; }
.thin-white { stroke: #ddd; stroke-width: 3; } .mark { stroke: #fff; stroke-width: 5; }
.label { fill: #eee; font: 26px "Liberation Sans", sans-serif; }

.actions { display: flex; align-items: center; padding: 11px 0 0 9px; }
.choice { display: flex; align-items: center; gap: 1px; width: 84px; }
.choice input { appearance: none; width: 9px; height: 9px; border: 1px solid #555; border-radius: 50%; background: #fff; }
.choice input:checked { background: radial-gradient(#111 0 2px, #fff 3px); }
.choice span { padding: 0 1px; line-height: 11px; white-space: nowrap; }
.choice .focused { outline: 1px dotted #333; }
.buttons { display: flex; gap: 6px; margin-left: auto; margin-right: 88px; }
.push { width: 74px; height: 17px; border: 1px solid #acacac; background: linear-gradient(#f0f0f0, #e6e6e6); }
.default { border-color: #4c9ce0; }

.statusbar { height: 14px; display: flex; justify-content: flex-end; gap: 61px; padding-right: 26px; border-top: 1px solid #fff; line-height: 14px; color: #333; }
```
